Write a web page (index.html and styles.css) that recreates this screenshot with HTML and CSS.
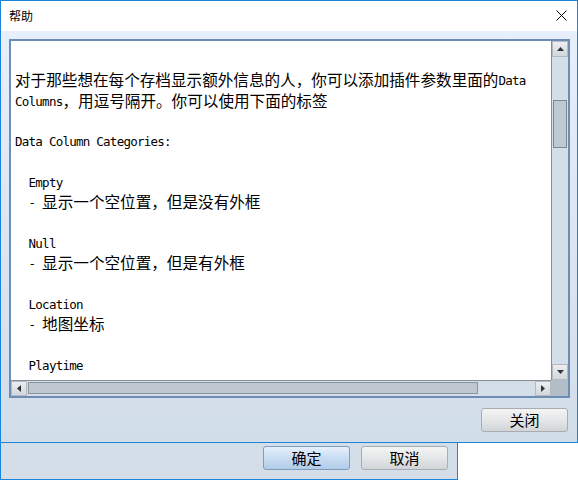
FILE: index.html
```html
<!DOCTYPE html>
<html lang="zh-CN">
<head>
<meta charset="utf-8">
<title>帮助</title>
<link rel="stylesheet" href="styles.css">
</head>
<body>
<div class="dialog">
  <div class="titlebar">
    <span class="title">帮助</span>
    <svg class="close" width="11" height="11" viewBox="0 0 11 11"><path d="M0.5 0.5 L10.5 10.5 M10.5 0.5 L0.5 10.5" stroke="#000" stroke-width="1" fill="none"/></svg>
  </div>
  <div class="client">
    <div class="textbox">
      <div class="view">
        <div class="content">
          <div class="ln"></div>
          <div class="ln">对于那些想在每个存档显示额外信息的人，你可以添加插件参数里面的<span class="m">Data</span></div>
          <div class="ln"><span class="m">Columns</span>，用逗号隔开。你可以使用下面的标签</div>
          <div class="ln"></div>
          <div class="ln"><span class="m">Data Column Categories:</span></div>
          <div class="ln"></div>
          <div class="ln"><span class="m">  Empty</span></div>
          <div class="ln"><span class="m">  - </span>显示一个空位置，但是没有外框</div>
          <div class="ln"></div>
          <div class="ln"><span class="m">  Null</span></div>
          <div class="ln"><span class="m">  - </span>显示一个空位置，但是有外框</div>
          <div class="ln"></div>
          <div class="ln"><span class="m">  Location</span></div>
          <div class="ln"><span class="m">  - </span>地图坐标</div>
          <div class="ln"></div>
          <div class="ln"><span class="m">  Playtime</span></div>
        </div>
      </div>
      <div class="vscroll">
        <div class="sbtn"><svg width="7" height="4" viewBox="0 0 7 4"><path d="M0 4 L3.5 0 L7 4 Z" fill="#303438"/></svg></div>
        <div class="vtrack"><div class="vthumb"></div></div>
        <div class="sbtn"><svg width="7" height="4" viewBox="0 0 7 4"><path d="M0 0 L3.5 4 L7 0 Z" fill="#303438"/></svg></div>
      </div>
      <div class="hscroll">
        <div class="sbtn"><svg width="4" height="7" viewBox="0 0 4 7"><path d="M4 0 L0 3.5 L4 7 Z" fill="#303438"/></svg></div>
        <div class="htrack"><div class="hthumb"></div></div>
        <div class="sbtn"><svg width="4" height="7" viewBox="0 0 4 7"><path d="M0 0 L4 3.5 L0 7 Z" fill="#303438"/></svg></div>
      </div>
      <div class="corner"></div>
    </div>
    <div class="actions">
      <button class="btn">关闭</button>
    </div>
  </div>
</div>
<div class="parent">
  <button class="btn primary">确定</button>
  <button class="btn">取消</button>
</div>
</body>
</html>
```
FILE: styles.css
```css
html, body {
  margin: 0;
  padding: 0;
  background: #ffffff;
}
body {
  width: 578px;
  height: 486px;
  overflow: hidden;
  font-family: "Noto Sans CJK SC", "Noto Sans", sans-serif;
  color: #000;
}
.dialog {
  width: 578px;
  height: 443px;
  box-sizing: border-box;
  border: 1px solid #1c84d8;
  display: flex;
  flex-direction: column;
}
.titlebar {
  height: 30px;
  flex: none;
  background: #ffffff;
  display: flex;
  align-items: center;
  justify-content: space-between;
  padding: 0 10px 0 8px;
}
.title {
  font-size: 12px;
  line-height: 1;
}
.close {
  display: block;
  margin-top: -1px;
}
.client {
  flex: 1;
  background: linear-gradient(#e6effb, #d1dde9);
  padding: 8px 7px 9px 8px;
  display: flex;
  flex-direction: column;
}
.textbox {
  width: 561px;
  height: 359px;
  box-sizing: border-box;
  border: 2px solid #6e8db4;
  display: grid;
  grid-template-columns: 540px 17px;
  grid-template-rows: 339px 16px;
  background: #ffffff;
}
.view {
  overflow: hidden;
  background: #ffffff;
}
.content {
  padding: 8px 0 0 4px;
}
.ln {
  height: 20.35px;
  line-height: 20.35px;
  font-size: 15.6px;
  white-space: pre;
  color: #000;
}
.m {
  font-family: "DejaVu Sans Mono", "Liberation Mono", monospace;
  font-size: 12.5px;
  letter-spacing: -0.75px;
  line-height: 1;
  vertical-align: 1px;
  color: #000;
}
.vscroll {
  display: flex;
  flex-direction: column;
  background: #d4dee8;
  border-left: 1px solid #858f99;
}
.sbtn {
  flex: none;
  width: 16px;
  height: 16px;
  box-sizing: border-box;
  background: linear-gradient(#eceef0, #d3d7db);
  border: 1px solid #b4bac0;
  display: flex;
  align-items: center;
  justify-content: center;
}
.vtrack {
  flex: 1;
  padding: 43px 1px 0;
}
.vthumb {
  height: 48px;
  box-sizing: border-box;
  background: #bfc9d3;
  border: 1px solid #7d8892;
}
.hscroll {
  display: flex;
  background: #d4dee8;
  border-top: 1px solid #858f99;
}
.hscroll .sbtn {
  height: 15px;
}
.htrack {
  flex: 1;
  padding: 1px 0 0 1px;
}
.hthumb {
  width: 450px;
  height: 12px;
  box-sizing: border-box;
  background: #bfc8d1;
  border: 1px solid #8a949e;
}
.corner {
  background: #b2bdc8;
}
.actions {
  display: flex;
  justify-content: flex-end;
  margin-top: 10px;
  padding-right: 2px;
}
.btn {
  width: 87px;
  height: 24px;
  box-sizing: border-box;
  border: 1px solid #a9adb1;
  border-radius: 3px;
  background: linear-gradient(#f4f4f4, #e4e6e8 50%, #d2d5d8);
  font-family: "Noto Sans CJK SC", "Noto Sans", sans-serif;
  font-size: 15px;
  line-height: 20px;
  color: #000;
  padding: 0;
  margin: 0;
}
.parent {
  width: 458px;
  height: 37px;
  box-sizing: border-box;
  border: 1px solid #1c84d8;
  border-top: none;
  background: #d3dee9;
  display: flex;
  justify-content: flex-end;
  gap: 11px;
  padding: 3px 9px 0 0;
}
.btn.primary {
  background: linear-gradient(#e6f0fb, #c9ddf2 50%, #b2cce8);
  border-color: #7e9cbe;
}
```
